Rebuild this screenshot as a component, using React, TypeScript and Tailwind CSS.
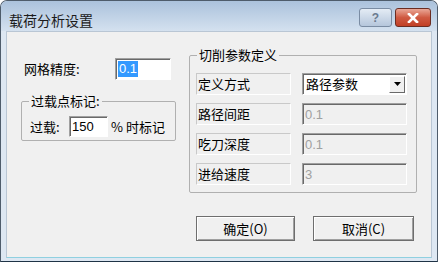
import React from 'react';

const cjk = { fontFamily: '"Noto Sans CJK SC", "Noto Sans", sans-serif' };
const latin = { fontFamily: '"Liberation Sans", Arial, sans-serif' };

// sunken edit box, classic 3D look
function Edit({
  width,
  disabled,
  children,
}: {
  width: string;
  disabled?: boolean;
  children?: React.ReactNode;
}) {
  return (
    <div
      className={`${width} flex items-center border border-t-[#a0a0a0] border-l-[#a0a0a0] border-r-white border-b-white shadow-[inset_1px_1px_0_#696969] pl-[2px] text-[13px] leading-none ${
        disabled ? 'bg-[#f0f0f0] text-[#a0a0a0] text-[12px]' : 'bg-white text-black'
      }`}
      style={latin}
    >
      {children}
    </div>
  );
}

function RowLabel({ children }: { children: React.ReactNode }) {
  return (
    <div className="w-[95px] h-[22px] border border-t-[#c9c9c9] border-l-[#c9c9c9] border-r-white border-b-white pl-[1px] pt-[1px] text-[13px] leading-[17px] text-black">
      {children}
    </div>
  );
}

function PushButton({ children }: { children: React.ReactNode }) {
  return (
    <div className="h-[25px] flex items-center justify-center bg-[#f0f0f0] border border-[#6e6e6e] shadow-[inset_1px_1px_0_#ffffff,inset_-1px_-1px_0_#a0a0a0] text-[13px] text-black">
      {children}
    </div>
  );
}

export default function App() {
  return (
    <div className="w-[438px] h-[262px] overflow-hidden" style={cjk}>
      <div className="w-full h-full flex flex-col rounded-t-[7px] border border-[#4e5c6b] border-b-[#1f3346] bg-[#dde7f2]">
        {/* title bar */}
        <div className="h-[30px] flex items-start shrink-0 rounded-t-[6px] bg-gradient-to-b from-[#abc2dc] to-[#d4e1ef]">
          <div className="pl-[8px] pt-[9px] text-[14px] leading-[20px] text-[#1b1b1b] flex-1">
            载荷分析设置
          </div>
          <div className="flex gap-[3px] pt-[7px] pr-[6px]">
            <div className="w-[33px] h-[19px] rounded-[3px] border border-[#7a8ca3] bg-gradient-to-b from-[#e4ecf5] to-[#b5c6db] flex items-center justify-center text-[12px] font-bold text-[#6a7a8e]" style={latin}>
              ?
            </div>
            <div className="w-[36px] h-[19px] rounded-[3px] border border-[#6b2d22] bg-gradient-to-b from-[#e9a797] via-[#cf5a42] to-[#c13f25] flex items-center justify-center">
              <svg width="12" height="10" viewBox="0 0 12 10">
                <path d="M2 1 L10 9 M10 1 L2 9" stroke="#ffffff" strokeWidth="2.6" strokeLinecap="square" />
              </svg>
            </div>
          </div>
        </div>

        {/* client area */}
        <div className="flex-1 mx-[5px] mb-[3px] bg-[#f0f0f0] border border-[#b9c6d4] border-b-[#8fd0e0] flex gap-[13px] pl-[14px]">
          {/* left column */}
          <div className="w-[155px] flex flex-col mt-[26px]">
            <div className="h-[22px] flex items-center">
              <div className="w-[94px] pl-[3px] text-[13px] text-black">网格精度:</div>
              <Edit width="w-[56px] h-[22px]">
                <span className="bg-[#3399ff] text-white h-[16px] leading-[16px] px-[1px]">0.1</span>
              </Edit>
            </div>
            <fieldset className="mt-[14px] w-[155px] border border-[#b0b0b0] rounded-[2px] pl-[7px] pt-[8px] pb-[3px]">
              <legend className="px-[2px] text-[13px] leading-[14px] text-black">过载点标记:</legend>
              <div className="flex items-center h-[21px]">
                <div className="w-[40px] pl-[1px] text-[13px] text-black">过载:</div>
                <Edit width="w-[39px] h-[21px]">150</Edit>
                <div className="pl-[3px] text-[13px] text-black whitespace-nowrap">% 时标记</div>
              </div>
            </fieldset>
          </div>

          {/* right column */}
          <div className="flex flex-col mt-[16px]">
            <fieldset className="w-[228px] border border-[#b0b0b0] rounded-[2px] pl-[6px] pt-[11px] pb-[7px]">
              <legend className="ml-[1px] px-[2px] text-[13px] leading-[14px] text-black">切削参数定义</legend>
              <div className="flex flex-col gap-[8px]">
                <div className="flex gap-[11px]">
                  <RowLabel>定义方式</RowLabel>
                  <div className="w-[105px] h-[22px] flex items-center justify-between border border-t-[#a0a0a0] border-l-[#a0a0a0] border-r-white border-b-white shadow-[inset_1px_1px_0_#696969] bg-white pl-[3px] pr-[1px]">
                    <span className="text-[13px] text-black">路径参数</span>
                    <div className="w-[16px] h-[17px] bg-[#f0f0f0] border border-t-white border-l-white border-r-[#696969] border-b-[#696969] flex items-center justify-center">
                      <svg width="7" height="4" viewBox="0 0 7 4">
                        <path d="M0 0 H7 L3.5 4 Z" fill="#000" />
                      </svg>
                    </div>
                  </div>
                </div>
                <div className="flex gap-[11px]">
                  <RowLabel>路径间距</RowLabel>
                  <Edit width="w-[105px] h-[22px]" disabled>0.1</Edit>
                </div>
                <div className="flex gap-[11px]">
                  <RowLabel>吃刀深度</RowLabel>
                  <Edit width="w-[105px] h-[22px]" disabled>0.1</Edit>
                </div>
                <div className="flex gap-[11px]">
                  <RowLabel>进给速度</RowLabel>
                  <Edit width="w-[105px] h-[22px]" disabled>3</Edit>
                </div>
              </div>
            </fieldset>
            <div className="flex gap-[18px] mt-[23px] pl-[7px]">
              <div className="w-[99px]">
                <PushButton>确定(O)</PushButton>
              </div>
              <div className="w-[101px]">
                <PushButton>取消(C)</PushButton>
              </div>
            </div>
          </div>
        </div>
      </div>
    </div>
  );
}
